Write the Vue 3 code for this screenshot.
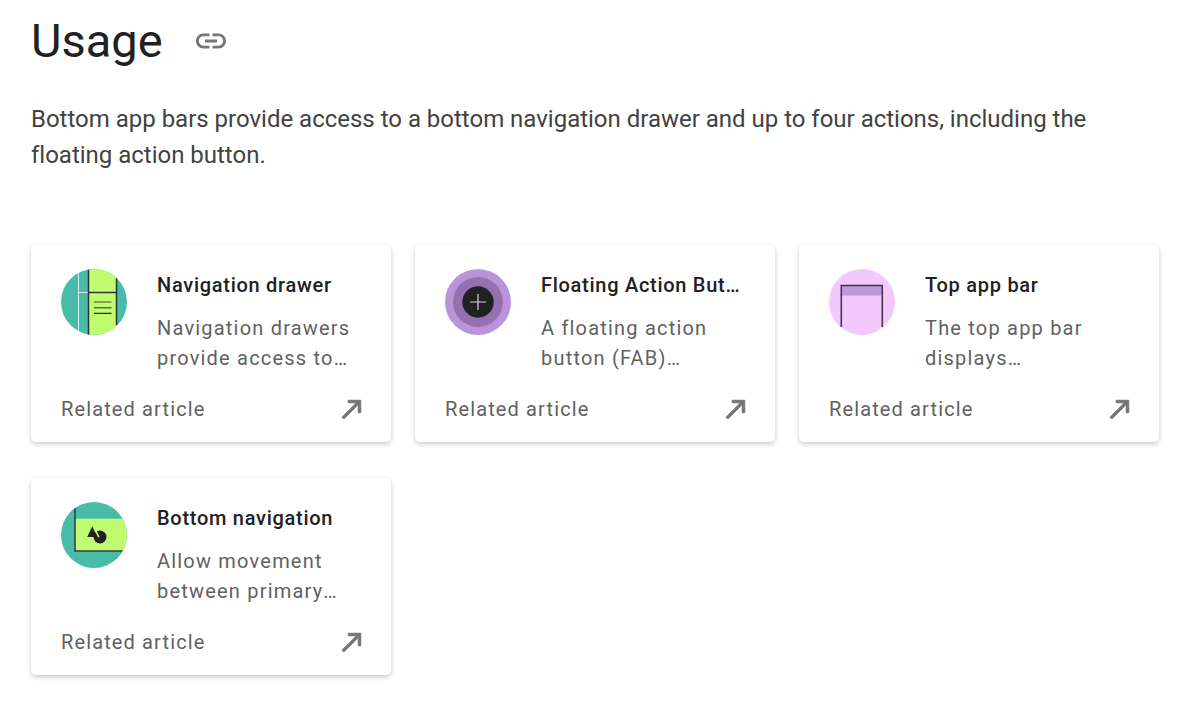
<script setup>
const cards = [
  { icon: 'drawer', title: 'Navigation drawer', text: 'Navigation drawers provide access to destinations in your app' },
  { icon: 'fab', title: 'Floating Action Button', text: 'A floating action button (FAB) represents the primary action' },
  { icon: 'top', title: 'Top app bar', text: 'The top app bar displays information and actions' },
  { icon: 'bottom', title: 'Bottom navigation', text: 'Allow movement between primary destinations in an app' },
]
</script>

<template>
  <main class="page">
    <div class="heading">
      <h1>Usage</h1>
      <svg class="link" viewBox="0 0 24 24"><path d="M3.9 12c0-1.71 1.39-3.1 3.1-3.1h4V7H7c-2.76 0-5 2.24-5 5s2.24 5 5 5h4v-1.9H7c-1.71 0-3.1-1.39-3.1-3.1zM8 13h8v-2H8v2zm9-6h-4v1.9h4c1.71 0 3.1 1.39 3.1 3.1s-1.39 3.1-3.1 3.1h-4V17h4c2.76 0 5-2.24 5-5s-2.24-5-5-5z" /></svg>
    </div>
    <p class="intro">Bottom app bars provide access to a bottom navigation drawer and up to four actions, including the floating action button.</p>
    <section class="grid">
      <article v-for="c in cards" :key="c.title" class="card">
        <div class="top">
          <svg class="thumb" viewBox="0 0 66 66">
            <defs>
              <clipPath id="disc"><circle cx="33" cy="33" r="33" /></clipPath>
            </defs>
            <g v-if="c.icon === 'drawer'" clip-path="url(#disc)">
              <rect width="66" height="66" fill="#48bca8" />
              <rect x="27.500" width="28" height="66" fill="#c0fc70" />
              <path d="M17.500 0v66M17.500 23.500h10" stroke="#d6f2ec" stroke-width="1" fill="none" />
              <path d="M27.500 0v66M27.500 23.500h28M55.500 9v47" stroke="#2f3136" stroke-width="1.500" fill="none" />
              <path d="M33 33h17.500" stroke="#6f8a3a" stroke-width="1.500" />
              <path d="M33 38.700h17.500" stroke="#56703a" stroke-width="1.500" />
              <path d="M33 44.300h17.500" stroke="#2a3320" stroke-width="1.200" />
            </g>
            <g v-else-if="c.icon === 'fab'">
              <circle cx="33" cy="33" r="33" fill="#ba94db" />
              <circle cx="33" cy="33" r="25" fill="#9670b0" />
              <circle cx="33" cy="33" r="15.700" fill="#212121" />
              <path d="M33 25v16M25 33h16" stroke="#d8d8d8" stroke-width="1.200" />
            </g>
            <g v-else-if="c.icon === 'top'">
              <circle cx="33" cy="33" r="33" fill="#f2c8fd" />
              <rect x="12.300" y="16.500" width="41" height="10" fill="#be98dc" />
              <path d="M12.300 58V16.500H53.300V58" stroke="#3c3340" stroke-width="1.500" fill="none" />
            </g>
            <g v-else clip-path="url(#disc)">
              <rect width="66" height="66" fill="#48bca8" />
              <rect x="14" y="16.700" width="52" height="32.600" fill="#c0fc70" />
              <path d="M14 6v43H61.500" stroke="#2f3a44" stroke-width="1.500" fill="none" />
              <circle cx="39" cy="35" r="6.500" fill="#212121" />
              <path d="M32.600 24.300L37.900 35.200" stroke="#c0fc70" stroke-width="1.600" />
              <path d="M31.300 24.300L26.200 35H36.200Z" fill="#212121" />
            </g>
          </svg>
          <div class="copy">
            <h2>{{ c.title }}</h2>
            <p>{{ c.text }}</p>
          </div>
        </div>
        <div class="foot">
          <span>Related article</span>
          <svg class="arrow" viewBox="0 0 24 24"><path d="M9 5v2h6.590L4 18.590 5.410 20 17 8.410V15h2V5z" /></svg>
        </div>
      </article>
    </section>
  </main>
</template>

<style>
html, body { margin: 0; background: #fff; }
</style>

<style scoped>
.page {
  width: 1189px;
  height: 705px;
  box-sizing: border-box;
  padding: 13px 30px 0 31px;
  overflow: hidden;
  font-family: Roboto, "Liberation Sans", sans-serif;
}
.heading {
  display: flex;
  align-items: center;
  gap: 30px;
  height: 56px;
}
h1 {
  margin: 0;
  font-size: 47px;
  font-weight: 400;
  line-height: 56px;
  color: #212121;
}
.link { width: 36px; height: 36px; fill: #757575; }
.intro {
  margin: 32px 0 0;
  font-size: 24px;
  line-height: 36px;
  letter-spacing: -0.01px;
  color: #424242;
}
.grid {
  display: grid;
  grid-template-columns: repeat(3, 360px);
  gap: 36px 24px;
  margin-top: 72px;
}
.card {
  height: 197px;
  box-sizing: border-box;
  padding: 24px 30px 0;
  border-radius: 5px;
  background: #fff;
  box-shadow: 0 2px 5px rgba(0, 0, 0, 0.22);
}
.top { display: flex; gap: 30px; height: 116px; }
.thumb { width: 66px; height: 66px; flex: none; }
.copy { min-width: 0; flex: 1; }
h2 {
  margin: 0;
  font-size: 20px;
  font-weight: 500;
  line-height: 32px;
  letter-spacing: 0.72px;
  color: #212121;
  white-space: nowrap;
  overflow: hidden;
  text-overflow: ellipsis;
  padding-right: 2px;
}
.copy p {
  margin: 12px 0 0;
  font-size: 20px;
  line-height: 30px;
  letter-spacing: 1.2px;
  color: #616161;
  display: -webkit-box;
  -webkit-line-clamp: 2;
  -webkit-box-orient: vertical;
  overflow: hidden;
}
.foot {
  display: flex;
  align-items: center;
  justify-content: space-between;
  height: 56px;
  margin-top: -4px;
  font-size: 20px;
  letter-spacing: 1.13px;
  color: #616161;
}
.arrow { width: 30px; height: 30px; fill: #757575; stroke: #757575; stroke-width: 0.8; margin-right: -6px; }
</style>
